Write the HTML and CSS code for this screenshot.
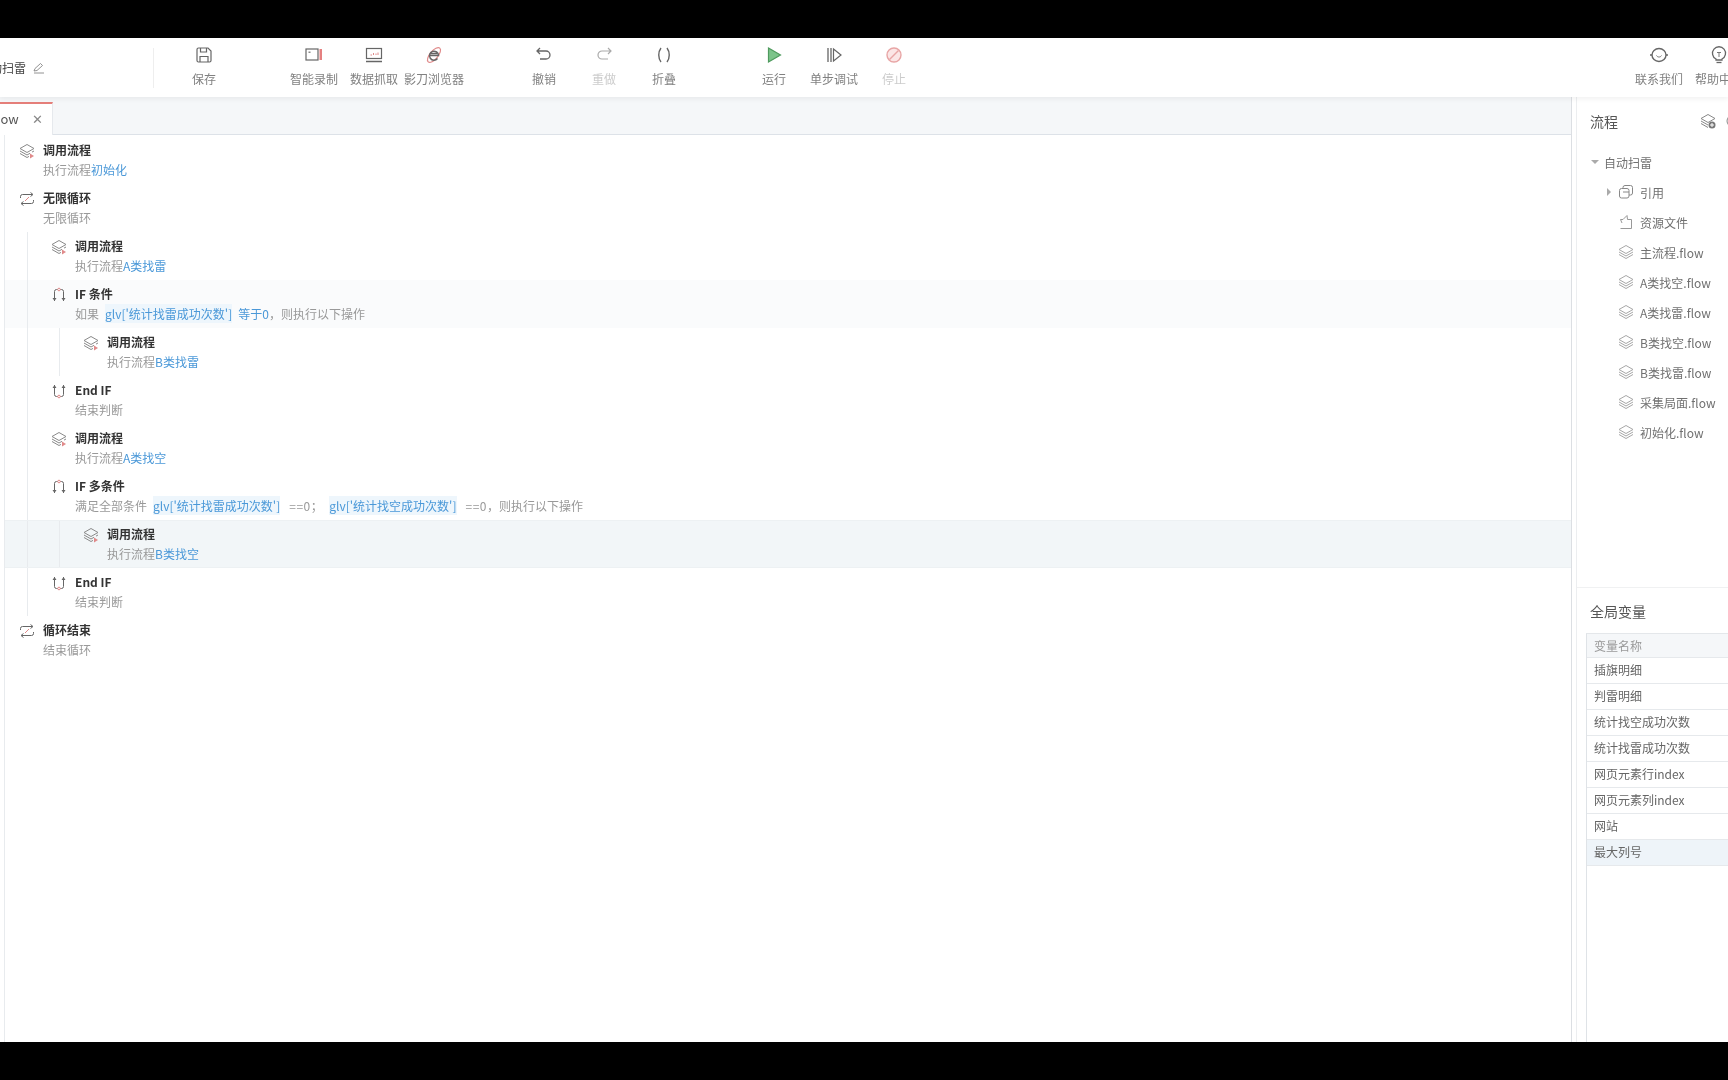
FILE: index.html
```html
<!DOCTYPE html>
<html lang="zh-CN">
<head>
    <meta charset="UTF-8">
    <title>自动扫雷</title>
    <link rel="stylesheet" href="styles.css">
</head>
<body>
    <svg class="defs" width="0" height="0">
        <symbol id="i-stack" viewBox="0 0 16 16">
            <path d="M8 1.500 15 5.500 8 9.500 1 5.500Z" fill="none" stroke="#8a8a8a"/>
            <path d="M1 8 8 12 11 10.300M15 8 13 9.100M1 10.500 8 14.500 10 13.400" fill="none" stroke="#8a8a8a"/>
            <path d="M11 10.500 15 13 11 15.500Z" fill="#e08a8a"/>
        </symbol>
        <symbol id="i-layers" viewBox="0 0 16 16">
            <path d="M8 1.500 15 5.500 8 9.500 1 5.500Z" fill="none" stroke="#a8a8a8"/>
            <path d="M1 8 8 12 15 8M1 10.500 8 14.500 15 10.500" fill="none" stroke="#a8a8a8"/>
        </symbol>
        <symbol id="i-loop" viewBox="0 0 16 16">
            <path d="M1.500 7V5.500A2 2 0 0 1 3.500 3.500H13.500M11.500 1.500 14 3.500 11.500 5.500" fill="none" stroke="#666"/>
            <path d="M14.500 9V10.500A2 2 0 0 1 12.500 12.500H2.500M4.500 10.500 2 12.500 4.500 14.500" fill="none" stroke="#666"/>
            <path d="M6 10 10 6" stroke="#e08a8a" fill="none"/>
        </symbol>
        <symbol id="i-if" viewBox="0 0 16 16">
            <path d="M3.500 14V4.500A2 2 0 0 1 5.500 2.500H10.500A2 2 0 0 1 12.500 4.500V14" fill="none" stroke="#666"/>
            <path d="M1.500 11 3.500 14 5.500 11ZM10.500 11 12.500 14 14.500 11Z" fill="#666"/>
            <circle cx="8" cy="2.500" r="1.300" fill="#fff" stroke="#e08a8a"/>
        </symbol>
        <symbol id="i-endif" viewBox="0 0 16 16">
            <path d="M3.500 2V11.500A2 2 0 0 0 5.500 13.500H10.500A2 2 0 0 0 12.500 11.500V2" fill="none" stroke="#666"/>
            <path d="M1.500 5 3.500 2 5.500 5ZM10.500 5 12.500 2 14.500 5Z" fill="#666"/>
            <circle cx="8" cy="13.500" r="1.300" fill="#fff" stroke="#e08a8a"/>
        </symbol>
    </svg>

    <div class="app">
        <header class="toolbar">
            <div class="project">
                <span class="project-name">自动扫雷</span>
                <svg class="pencil" viewBox="0 0 12 12"><path d="M1 9 2 6.500 7.500 1.500 9.500 3.500 4 8.500ZM1 11H11" fill="none" stroke="#777" stroke-width=".8"/></svg>
            </div>
            <div class="tool-group first">
                <div class="tool">
                    <svg viewBox="0 0 18 18"><path d="M2 3.500A1.500 1.500 0 0 1 3.500 2H13L16 5V14.500A1.500 1.500 0 0 1 14.500 16H3.500A1.500 1.500 0 0 1 2 14.500ZM5.500 2V6H11.500V2M5 16V10.500H13V16" fill="none" stroke="#666" stroke-width="1.200"/></svg>
                    <span>保存</span>
                </div>
            </div>
            <div class="tool-group">
                <div class="tool">
                    <svg viewBox="0 0 18 18"><rect x="1" y="3" width="12" height="11" fill="none" stroke="#666" stroke-width="1.200"/><rect x="14.500" y="3" width="2.500" height="11" fill="#e58080"/><rect x="3.500" y="5.500" width="2" height="1.500" fill="#888"/></svg>
                    <span>智能录制</span>
                </div>
                <div class="tool">
                    <svg viewBox="0 0 18 18"><rect x="1.500" y="2.500" width="15" height="10" fill="none" stroke="#666" stroke-width="1.200"/><path d="M1 15.500H17" stroke="#666" stroke-width="1.500"/><path d="M5.500 9H7M8.500 9V7M11 9V7.500M13 9V6.500" stroke="#e08a8a"/></svg>
                    <span>数据抓取</span>
                </div>
                <div class="tool">
                    <svg viewBox="0 0 18 18"><ellipse cx="9" cy="9" rx="9" ry="4" transform="rotate(-50 9 9)" fill="none" stroke="#e08a8a" stroke-width="1.200"/><path d="M4.500 9.500H13.500A4.500 4.500 0 1 0 12.500 12.500M5 7.500H12" fill="none" stroke="#666" stroke-width="1.500"/></svg>
                    <span>影刀浏览器</span>
                </div>
            </div>
            <div class="tool-group">
                <div class="tool">
                    <svg viewBox="0 0 18 18"><path d="M2 5H11A4 4 0 0 1 11 13H5M5 2 2 5 5 8" fill="none" stroke="#666" stroke-width="1.300"/></svg>
                    <span>撤销</span>
                </div>
                <div class="tool off">
                    <svg viewBox="0 0 18 18"><path d="M16 5H7A4 4 0 0 0 7 13H13M13 2 16 5 13 8" fill="none" stroke="#aaa" stroke-width="1.200"/></svg>
                    <span>重做</span>
                </div>
                <div class="tool">
                    <svg viewBox="0 0 18 18"><path d="M6 2C3 6 3 12 6 16M12 2C15 6 15 12 12 16" fill="none" stroke="#666" stroke-width="1.400"/></svg>
                    <span>折叠</span>
                </div>
            </div>
            <div class="tool-group">
                <div class="tool">
                    <svg viewBox="0 0 18 18"><path d="M3.500 2 15.500 9 3.500 16Z" fill="#7cc48a" stroke="#4f9a5e" stroke-width="1.200"/></svg>
                    <span>运行</span>
                </div>
                <div class="tool">
                    <svg viewBox="0 0 18 18"><path d="M3 2V16M6 2V16" stroke="#666" stroke-width="1.300"/><path d="M8.500 3 16 9 8.500 15Z" fill="#fff" stroke="#666" stroke-width="1.200"/></svg>
                    <span>单步调试</span>
                </div>
                <div class="tool off">
                    <svg viewBox="0 0 18 18"><circle cx="9" cy="9" r="7" fill="#fbe6e6" stroke="#e8a5a5" stroke-width="1.400"/><path d="M4.500 13.500 13.500 4.500" stroke="#e8a5a5" stroke-width="1.400"/></svg>
                    <span>停止</span>
                </div>
            </div>
            <div class="tool-group right">
                <div class="tool">
                    <svg viewBox="0 0 18 18"><path d="M9 2.500C13 2.500 16 5.500 16 9S13 15.500 9 15.500 2 12.500 2 9 5 2.500 9 2.500Z" fill="none" stroke="#666" stroke-width="1.400"/><path d="M1 8V10M17 8V10" stroke="#666" stroke-width="1.500"/><path d="M6.500 9.500C7.500 11.500 10.500 11.500 11.500 9.500" fill="none" stroke="#777"/></svg>
                    <span>联系我们</span>
                </div>
                <div class="tool">
                    <svg viewBox="0 0 18 18"><path d="M6 13A6.500 6.500 0 1 1 12 13V14H6Z" fill="none" stroke="#666" stroke-width="1.300"/><path d="M6.500 16.500H11.500" stroke="#666" stroke-width="1.300"/><path d="M7 6.500H11M9 6.500V11" stroke="#777"/></svg>
                    <span>帮助中心</span>
                </div>
            </div>
        </header>

        <div class="workspace">
            <main class="editor">
                <div class="tabs">
                    <div class="tab">
                        <span class="tab-name">主流程.flow</span>
                        <span class="tab-close">✕</span>
                    </div>
                </div>
                <div class="steps">
                    <div class="step lv0">
                        <svg class="step-icon"><use href="#i-stack"/></svg>
                        <div class="step-text"><b>调用流程</b><p>执行流程<em>初始化</em></p></div>
                    </div>
                    <div class="step lv0">
                        <svg class="step-icon"><use href="#i-loop"/></svg>
                        <div class="step-text"><b>无限循环</b><p>无限循环</p></div>
                    </div>
                    <div class="step lv1">
                        <svg class="step-icon"><use href="#i-stack"/></svg>
                        <div class="step-text"><b>调用流程</b><p>执行流程<em>A类找雷</em></p></div>
                    </div>
                    <div class="step lv1 soft">
                        <svg class="step-icon"><use href="#i-if"/></svg>
                        <div class="step-text"><b>IF 条件</b><p>如果<code>glv['统计找雷成功次数']</code><em class="op">等于0</em>，则执行以下操作</p></div>
                    </div>
                    <div class="step lv2">
                        <svg class="step-icon"><use href="#i-stack"/></svg>
                        <div class="step-text"><b>调用流程</b><p>执行流程<em>B类找雷</em></p></div>
                    </div>
                    <div class="step lv1">
                        <svg class="step-icon"><use href="#i-endif"/></svg>
                        <div class="step-text"><b>End IF</b><p>结束判断</p></div>
                    </div>
                    <div class="step lv1">
                        <svg class="step-icon"><use href="#i-stack"/></svg>
                        <div class="step-text"><b>调用流程</b><p>执行流程<em>A类找空</em></p></div>
                    </div>
                    <div class="step lv1">
                        <svg class="step-icon"><use href="#i-if"/></svg>
                        <div class="step-text"><b>IF 多条件</b><p>满足全部条件<code>glv['统计找雷成功次数']</code><span class="cmp">==0；</span><code>glv['统计找空成功次数']</code><span class="cmp">==0</span>，则执行以下操作</p></div>
                    </div>
                    <div class="step lv2 active">
                        <svg class="step-icon"><use href="#i-stack"/></svg>
                        <div class="step-text"><b>调用流程</b><p>执行流程<em>B类找空</em></p></div>
                    </div>
                    <div class="step lv1">
                        <svg class="step-icon"><use href="#i-endif"/></svg>
                        <div class="step-text"><b>End IF</b><p>结束判断</p></div>
                    </div>
                    <div class="step lv0">
                        <svg class="step-icon"><use href="#i-loop"/></svg>
                        <div class="step-text"><b>循环结束</b><p>结束循环</p></div>
                    </div>
                </div>
            </main>

            <aside class="side">
                <section class="side-tree">
                    <div class="side-head">
                        <h3>流程</h3>
                        <svg class="add-flow" viewBox="0 0 16 16"><path d="M8 1.500 15 5.500 8 9.500 1 5.500Z" fill="none" stroke="#888"/><path d="M1 8 8 12M1 10.500 8 14.500" fill="none" stroke="#888"/><circle cx="12" cy="12" r="3.500" fill="#777"/><path d="M10 12H14M12 10V14" stroke="#fff"/></svg>
                        <svg class="add-group" viewBox="0 0 16 16"><circle cx="8" cy="8" r="6" fill="none" stroke="#888"/></svg>
                    </div>
                    <ul class="tree">
                        <li class="root"><i class="caret down"></i>自动扫雷</li>
                        <li><i class="caret"></i>
                            <svg viewBox="0 0 16 16"><rect x="1.500" y="4.500" width="9.500" height="9.500" rx="2" fill="none" stroke="#888"/><path d="M5 4.500V3.500A2 2 0 0 1 7 1.500H12.500A2 2 0 0 1 14.500 3.500V9A2 2 0 0 1 12.500 11H11M5 8H11" fill="none" stroke="#888"/></svg>引用</li>
                        <li>
                            <svg viewBox="0 0 16 16"><path d="M4 14.500H13.500V5.500H9.500L9 1.500 5 5.500H2.500L4 9M4 14.500 2.500 14.500" fill="none" stroke="#999"/></svg>资源文件</li>
                        <li><svg><use href="#i-layers"/></svg>主流程.flow</li>
                        <li><svg><use href="#i-layers"/></svg>A类找空.flow</li>
                        <li><svg><use href="#i-layers"/></svg>A类找雷.flow</li>
                        <li><svg><use href="#i-layers"/></svg>B类找空.flow</li>
                        <li><svg><use href="#i-layers"/></svg>B类找雷.flow</li>
                        <li><svg><use href="#i-layers"/></svg>采集局面.flow</li>
                        <li><svg><use href="#i-layers"/></svg>初始化.flow</li>
                    </ul>
                </section>
                <section class="side-vars">
                    <h3>全局变量</h3>
                    <div class="var-table">
                        <div class="var-head">变量名称</div>
                        <div class="var-row">插旗明细</div>
                        <div class="var-row">判雷明细</div>
                        <div class="var-row">统计找空成功次数</div>
                        <div class="var-row">统计找雷成功次数</div>
                        <div class="var-row">网页元素行index</div>
                        <div class="var-row">网页元素列index</div>
                        <div class="var-row">网站</div>
                        <div class="var-row selected">最大列号</div>
                    </div>
                </section>
            </aside>
        </div>
    </div>
</body>
</html>
```

FILE: styles.css
```css
* {
    box-sizing: border-box;
}
html, body {
    height: 100%;
}
body {
    margin: 0;
    padding: 38px 0;
    background-color: #000;
    font-family: "Noto Sans CJK SC", "Noto Sans", sans-serif;
    font-size: 12px;
    color: #333;
    overflow: hidden;
}
.defs {
    position: absolute;
}
.app {
    height: 1004px;
    display: flex;
    flex-direction: column;
    background-color: #fff;
    overflow: hidden;
    filter: blur(0.35px); /* the source is a soft video frame */
}

/* toolbar */
.toolbar {
    height: 59px;
    flex: none;
    display: flex;
    align-items: center;
    padding-bottom: 2px;
    background-color: #fff;
    box-shadow: 0 2px 5px rgba(0,0,0,0.06);
    position: relative;
    z-index: 5;
}
.project {
    width: 154px;
    height: 40px;
    flex: none;
    display: flex;
    align-items: center;
    margin-top: 2px;
    border-right: 1px solid #eee;
    overflow: hidden;
}
.project-name {
    font-size: 12px;
    margin-left: -22px;
    white-space: nowrap;
    color: #444;
}
.pencil {
    width: 12px;
    height: 12px;
    margin-left: 7px;
}
.tool-group {
    display: flex;
    margin-left: 50px;
}
.tool-group.first {
    margin-left: 20px;
}
.tool-group.right {
    margin-left: auto;
    margin-right: -21px;
}
.tool {
    width: 60px;
    display: flex;
    flex-direction: column;
    align-items: center;
    gap: 7px;
    font-size: 12px;
    line-height: 16px;
    color: #808080;
    white-space: nowrap;
}
.tool svg {
    width: 18px;
    height: 18px;
}
.tool.off {
    color: #ccc;
}

/* editor */
.workspace {
    flex: 1;
    display: flex;
    min-height: 0;
}
.editor {
    width: 1572px;
    flex: none;
    display: flex;
    flex-direction: column;
    border-right: 1px solid #dcdfe3;
}
.tabs {
    height: 38px;
    flex: none;
    padding-top: 5px;
    background-color: #f5f7f9;
    border-bottom: 1px solid #dde2e8;
}
.tab {
    width: 53px;
    height: 33px;
    display: flex;
    align-items: center;
    justify-content: space-between;
    padding: 0 9px 2px 0;
    background-color: #fff;
    border-top: 2px solid #e57f7a;
    border-right: 1px solid #e6e9ed;
    overflow: hidden;
}
.tab-name {
    margin-left: -50px;
    font-size: 13px;
    color: #555;
    white-space: nowrap;
}
.tab-close {
    font-size: 13px;
    color: #888;
}
.steps {
    flex: 1;
    margin-left: 4px;
    padding-top: 1px;
    border-left: 1px solid #e8ebee;
}
.step {
    height: 48px;
    display: flex;
    align-items: flex-start;
    padding-top: 4px;
    background-repeat: no-repeat;
}
.lv0 {
    padding-left: 14px;
}
.lv1 {
    padding-left: 46px;
    background-image: linear-gradient(#e8ebee, #e8ebee);
    background-size: 1px 100%;
    background-position: 22px 0;
}
.lv2 {
    padding-left: 78px;
    background-image: linear-gradient(#e8ebee, #e8ebee), linear-gradient(#e8ebee, #e8ebee);
    background-size: 1px 100%, 1px 100%;
    background-position: 22px 0, 54px 0;
}
.soft {
    background-color: #fafbfc;
}
.active {
    background-color: #f2f6f8;
    border-top: 1px solid #edf1f3;
    border-bottom: 1px solid #edf1f3;
    padding-top: 3px;
}
.step-icon {
    width: 16px;
    height: 16px;
    flex: none;
    margin-top: 3px;
    margin-right: 8px;
}
.step-text b {
    display: block;
    font-weight: 700;
    line-height: 20px;
    color: #333;
}
.step-text p {
    margin: 0;
    line-height: 19px;
    color: #999;
    white-space: nowrap;
}
.step-text em {
    font-style: normal;
    color: #4a98d8;
}
.step-text em.op {
    margin-left: 3px;
}
.step-text code {
    font-family: inherit;
    margin: 0 3px 0 6px;
    padding: 1px 0;
    color: #4a98d8;
    background-color: #eef6fc;
}
.cmp {
    margin: 0 0 0 6px;
    letter-spacing: 0.5px;
}

/* right side */
.side {
    width: 152px;
    flex: none;
    margin-left: 4px;
    display: flex;
    flex-direction: column;
    border-left: 1px solid #eceef0;
}
.side-tree {
    height: 491px;
    flex: none;
    border-bottom: 1px solid #f0f1f2;
    overflow: hidden;
}
.side-head {
    height: 46px;
    display: flex;
    align-items: center;
    padding: 1px 0 0 13px;
    overflow: hidden;
}
h3 {
    margin: 0;
    font-size: 14px;
    font-weight: 400;
    color: #555;
}
.add-flow {
    width: 16px;
    height: 16px;
    margin-left: auto;
}
.add-group {
    width: 16px;
    height: 16px;
    flex: none;
    margin: 0 -13px 0 9px;
}
.tree {
    list-style: none;
    margin: 0;
    padding: 4px 0 0;
}
.tree li {
    height: 30px;
    display: flex;
    align-items: center;
    padding-left: 41px;
    color: #707070;
    white-space: nowrap;
    position: relative;
}
.tree li svg {
    width: 16px;
    height: 16px;
    margin-right: 6px;
    flex: none;
}
.tree .root {
    padding-left: 27px;
}
.caret {
    position: absolute;
    left: 30px;
    top: 11px;
    border-left: 4px solid #aaa;
    border-top: 4px solid transparent;
    border-bottom: 4px solid transparent;
}
.caret.down {
    left: 14px;
    top: 13px;
    border-top: 4px solid #aaa;
    border-left: 4px solid transparent;
    border-right: 4px solid transparent;
    border-bottom: 0;
}
.side-vars {
    flex: 1;
    display: flex;
    flex-direction: column;
    min-height: 0;
}
.side-vars h3 {
    height: 45px;
    padding: 13px 0 0 13px;
    line-height: 20px;
}
.var-table {
    flex: 1;
    margin-left: 9px;
    border-left: 1px solid #dfe3e7;
    border-top: 1px solid #e4e7ea;
}
.var-head, .var-row {
    height: 26px;
    line-height: 24px;
    padding-left: 7px;
    border-bottom: 1px solid #e6e9ec;
    color: #666;
}
.var-head {
    height: 24px;
    line-height: 23px;
    background-color: #f5f7f9;
    color: #999;
}
.var-row.selected {
    background-color: #eef4f9;
}
```
